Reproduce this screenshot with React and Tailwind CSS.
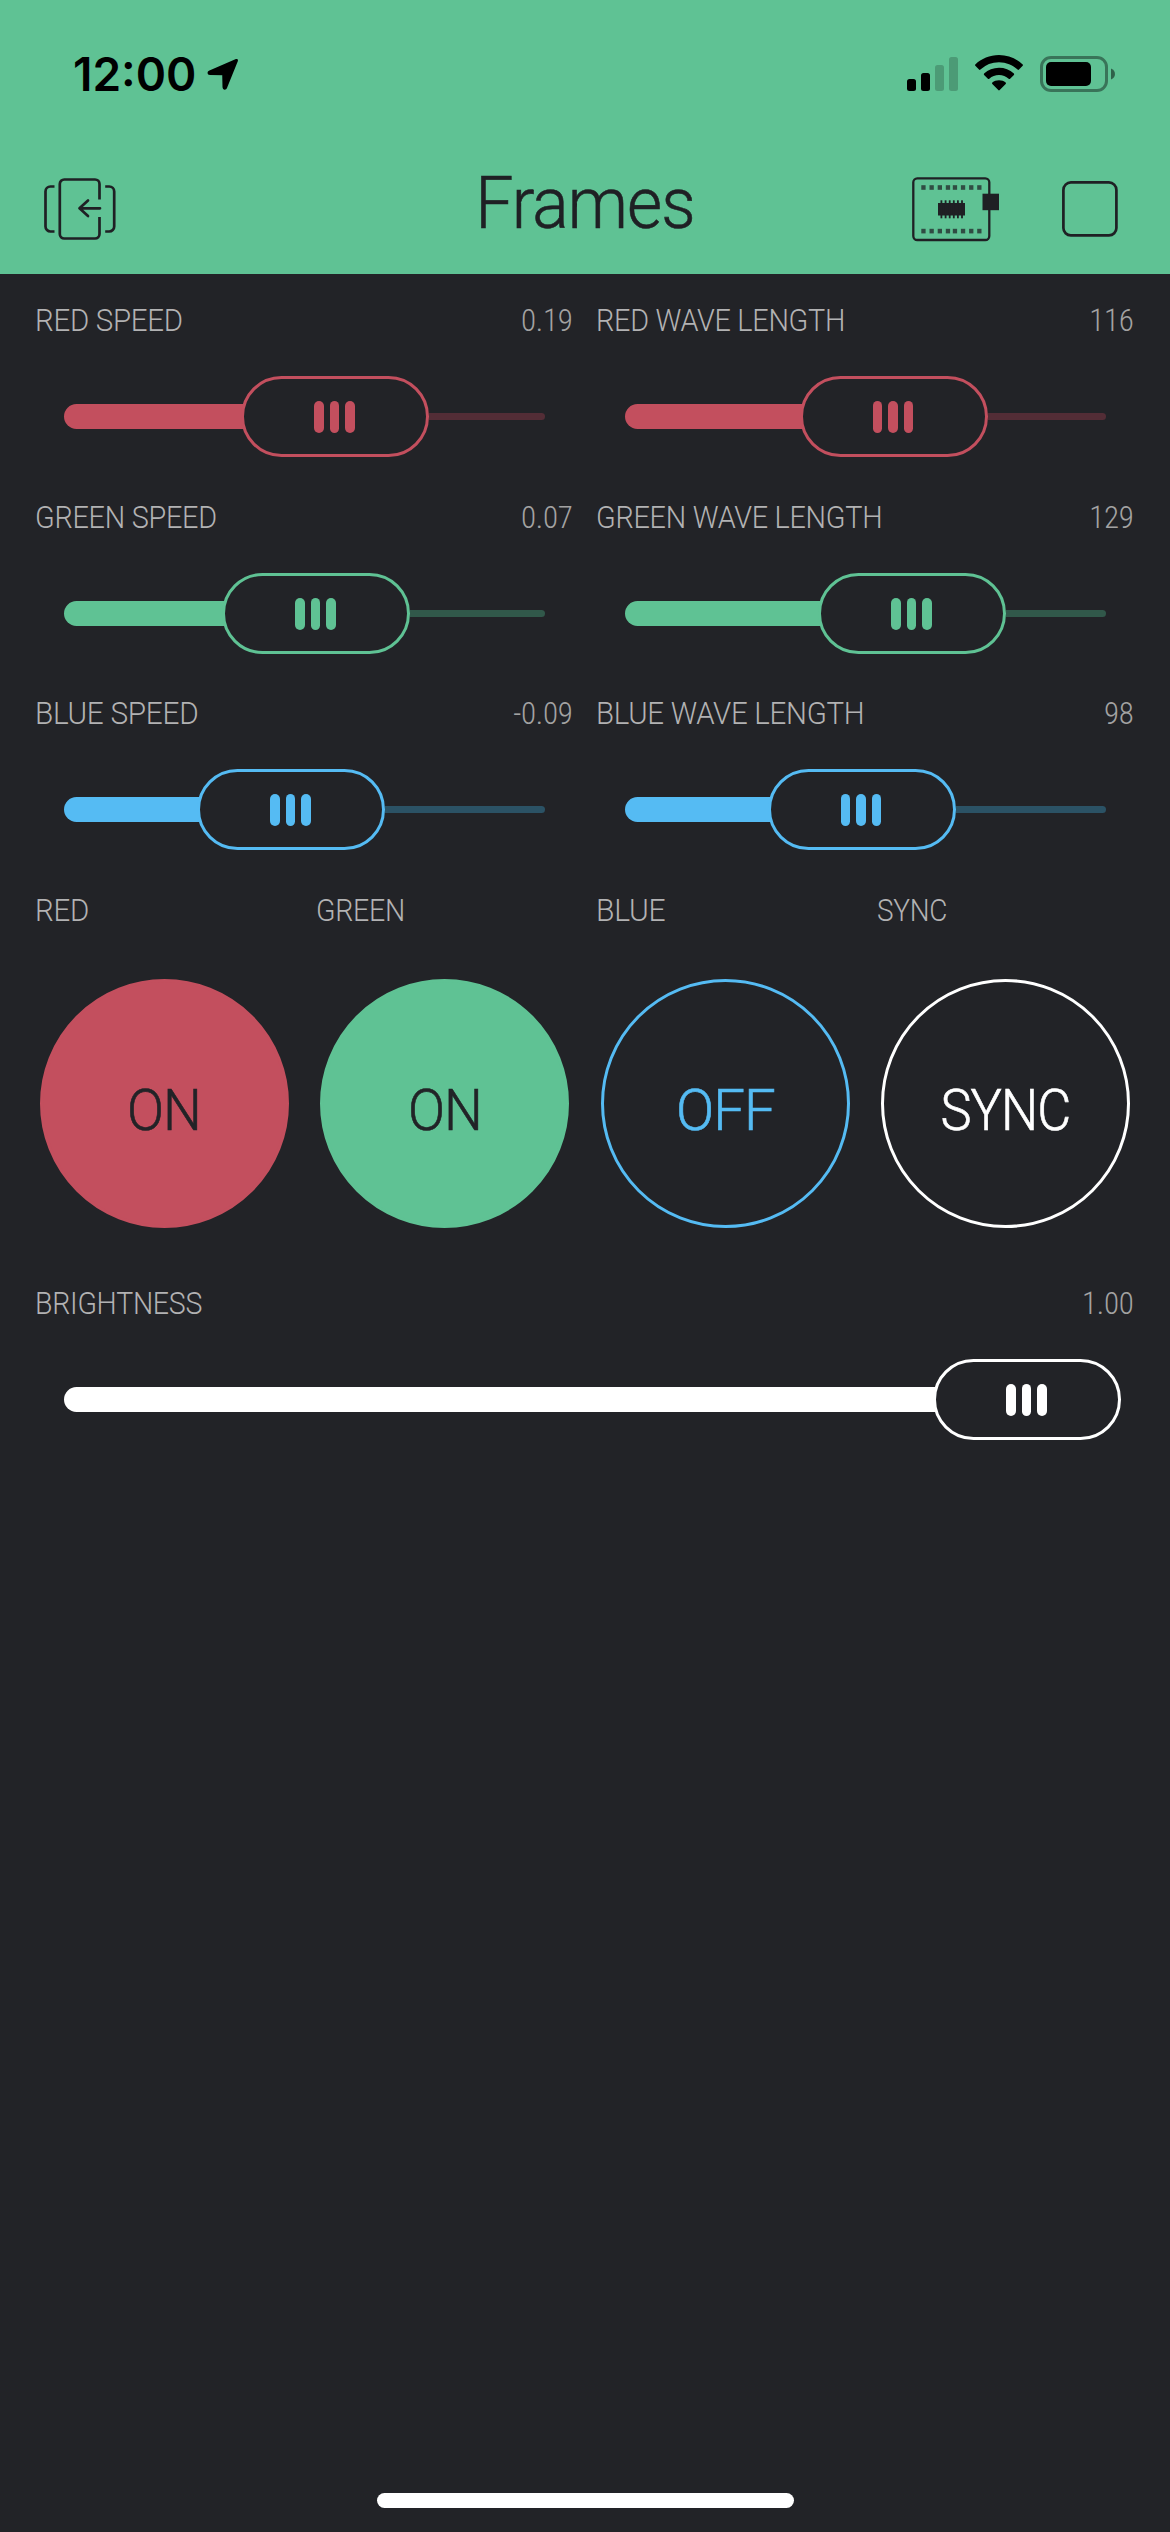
import React from "react";

const TONES = {
  red: {
    fill: "bg-[#c34f5e]",
    border: "border-[#c34f5e]",
    rail: "bg-[#532d36]",
    text: "text-[#c34f5e]",
  },
  green: {
    fill: "bg-[#5fc294]",
    border: "border-[#5fc294]",
    rail: "bg-[#31584a]",
    text: "text-[#5fc294]",
  },
  blue: {
    fill: "bg-[#55bbf3]",
    border: "border-[#55bbf3]",
    rail: "bg-[#2b5265]",
    text: "text-[#55bbf3]",
  },
  white: {
    fill: "bg-white",
    border: "border-white",
    rail: "bg-transparent",
    text: "text-white",
  },
};

const SLIDERS = [
  { label: "RED SPEED", value: "0.19", tone: "red", fill: "w-[181px]", fit: "scale-x-95" },
  { label: "RED WAVE LENGTH", value: "116", tone: "red", fill: "w-[178.5px]", fit: "scale-x-93" },
  { label: "GREEN SPEED", value: "0.07", tone: "green", fill: "w-[162px]", fit: "scale-x-93" },
  { label: "GREEN WAVE LENGTH", value: "129", tone: "green", fill: "w-[197px]", fit: "scale-x-93" },
  { label: "BLUE SPEED", value: "-0.09", tone: "blue", fill: "w-[137px]", fit: "scale-x-96" },
  { label: "BLUE WAVE LENGTH", value: "98", tone: "blue", fill: "w-[146.5px]", fit: "scale-x-95" },
];

const BUTTONS = [
  { label: "RED", text: "ON", tone: "red", on: true, fit: "scale-x-95", textFit: "scale-x-95" },
  { label: "GREEN", text: "ON", tone: "green", on: true, fit: "scale-x-92", textFit: "scale-x-95" },
  { label: "BLUE", text: "OFF", tone: "blue", on: false, fit: "scale-x-97", textFit: "scale-x-98" },
  { label: "SYNC", text: "SYNC", tone: "white", on: false, fit: "scale-x-90", textFit: "scale-x-91" },
];

function Caption({ label, value, fit }) {
  return (
    <div className="flex h-[44px] items-center justify-between pl-[7px] pr-[8.5px] text-[31px] leading-none tracking-[-0.3px] text-[#b2b2b3]">
      <span className={`origin-left whitespace-nowrap ${fit}`}>{label}</span>
      {value && <span className="text-[#a2a2a2] [font-stretch:75%]">{value}</span>}
    </div>
  );
}

function Slider({ label, value, tone, fill, fit, className = "" }) {
  const t = TONES[tone];
  return (
    <section className={className}>
      <Caption label={label} value={value} fit={fit} />
      <div className="mx-[36px] mt-[34px] flex h-[81px] items-center">
        <div className={`h-[25px] shrink-0 rounded-l-full ${t.fill} ${fill}`} />
        <div
          className={`-ml-1 flex h-full w-[188px] shrink-0 items-center justify-center gap-[6px] rounded-full border-3 bg-[#222327] pr-px ${t.border}`}
        >
          <i className={`h-8 w-[9.6px] rounded-full ${t.fill}`} />
          <i className={`h-8 w-[9.6px] rounded-full ${t.fill}`} />
          <i className={`h-8 w-[9.6px] rounded-full ${t.fill}`} />
        </div>
        <div className={`h-[7px] flex-1 rounded-r-full ${t.rail}`} />
      </div>
    </section>
  );
}

function RoundButton({ label, text, tone, on, fit, textFit }) {
  const t = TONES[tone];
  return (
    <section>
      <Caption label={label} fit={fit} />
      <div
        className={`mx-auto mt-[47px] flex size-[249px] items-center justify-center rounded-full border-3 pt-[14px] text-[57.5px] leading-none tracking-[-1px] [-webkit-text-stroke:0.6px] ${t.border} ${on ? t.fill : ""} ${on ? "text-[#222327]" : t.text}`}
      >
        <span className={textFit}>{text}</span>
      </div>
    </section>
  );
}

function LocationIcon() {
  return (
    <svg width="33" height="33" viewBox="0 0 33 33">
      <path
        d="M29.5 2.5 3 13.8c-1.4.7-1.3 1.6 0 1.7l13.7.3.3 13.3c.1 1.4 1.1 1.5 1.700.2Z"
        stroke="#000"
        strokeWidth="3"
        strokeLinejoin="round"
      />
    </svg>
  );
}

function SignalIcon() {
  return (
    <svg width="52" height="36" viewBox="0 0 52 36">
      <rect x="0" y="23" width="9" height="12" rx="2.5" />
      <rect x="14" y="17" width="9" height="18" rx="2.5" />
      <rect x="28" y="9" width="9" height="26" rx="2.5" opacity=".2" />
      <rect x="42" y="1" width="9" height="34" rx="2.5" opacity=".2" />
    </svg>
  );
}

function WifiIcon() {
  return (
    <svg width="48" height="36" viewBox="0 0 48 36">
      <path d="M24 0C14.8 0 6.4 3.6.3 9.4c-.4.4-.4 1 0 1.4l3.7 3.8c.4.4 1 .4 1.4 0A27 27 0 0 1 24 7.2c7.200 0 13.700 2.800 18.600 7.400.4.4 1 .4 1.400 0l3.700-3.800c.4-.4.4-1 0-1.400C41.600 3.600 33.200 0 24 0Z" />
      <path d="M24 12.800c-5.700 0-10.900 2.100-14.900 5.700-.4.4-.4 1 0 1.400l3.800 3.800c.4.4 1 .4 1.400 0A14.500 14.500 0 0 1 24 20c3.700 0 7.100 1.400 9.700 3.700.4.4 1 .4 1.400 0l3.800-3.800c.4-.4.4-1 0-1.400A22.200 22.200 0 0 0 24 12.800Z" />
      <path d="M24 25.200c-2.600 0-4.900.9-6.700 2.300-.4.4-.4 1 0 1.400l6 6.200c.4.4 1 .4 1.400 0l6-6.200c.4-.4.4-1 0-1.400-1.800-1.400-4.100-2.300-6.700-2.300Z" />
    </svg>
  );
}

function BatteryIcon() {
  return (
    <svg width="76" height="36" viewBox="0 0 76 36">
      <rect x="1.5" y="1.5" width="65" height="33" rx="9.5" fill="none" stroke="#000" strokeWidth="3" opacity=".4" />
      <rect x="6" y="6" width="45" height="24" rx="5" />
      <path d="M71 12.5c5.300 2 5.300 9 0 11Z" opacity=".5" />
    </svg>
  );
}

function ExitIcon() {
  return (
    <svg width="76" height="64" viewBox="0 0 76 64" fill="none" stroke="#1f2024" strokeWidth="2.7">
      <path d="M13.500 9.500H9.500a5 5 0 0 0-5 5v35a5 5 0 0 0 5 5h4" />
      <path d="M64.200 9.500h4a5 5 0 0 1 5 5v35a5 5 0 0 1-5 5h-4" />
      <path d="M58.500 22.500V7a4.500 4.500 0 0 0-4.500-4.500H23.300A4.500 4.500 0 0 0 18.800 7v50a4.500 4.500 0 0 0 4.500 4.500H54a4.500 4.500 0 0 0 4.500-4.500V40" />
      <path d="M59 31.300H38.500M47 23.500l-8.500 7.800 8.500 7.800" strokeLinecap="round" strokeLinejoin="round" />
    </svg>
  );
}

const PADS = [10.3, 18.5, 26.7, 34.8, 41.8, 49.9, 58.1, 66.2];
const PINS = [30, 34.2, 38.3, 42.4, 46.5, 50.6];

function BoardIcon() {
  return (
    <svg width="88" height="66" viewBox="0 0 88 66" fill="#1f2024">
      <rect x="2.3" y="2.3" width="76" height="61.7" rx="4" fill="none" stroke="#1f2024" strokeWidth="2.3" />
      {PADS.map((x) => (
        <g key={x} opacity=".72">
          <rect x={x} y="9.2" width="4.3" height="4.6" />
          <rect x={x} y="52.8" width="4.3" height="4.6" />
        </g>
      ))}
      <rect x="27" y="27" width="27" height="12.5" />
      {PINS.map((x) => (
        <rect key={x} x={x - 0.5} y="24.3" width="1.8" height="18" />
      ))}
      <rect x="71.5" y="17.7" width="16.5" height="16.5" />
    </svg>
  );
}

function StopIcon() {
  return (
    <svg width="56" height="56" viewBox="0 0 56 56">
      <rect x="1.4" y="1.4" width="53" height="53" rx="7.5" fill="none" stroke="#1f2024" strokeWidth="2.7" />
    </svg>
  );
}

export default function App() {
  return (
    <div className="flex h-[2532px] w-[1170px] flex-col overflow-hidden bg-[#222327] font-['Roboto',sans-serif] font-light">
      <header className="h-[274px] bg-[#5fc294]">
        <div className="flex h-[148px] items-center justify-between pl-[73px] pr-[54px]">
          <div className="flex items-center gap-[11px]">
            <span className="font-['Inter',sans-serif] text-[46px] font-semibold leading-none">12:00</span>
            <LocationIcon />
          </div>
          <div className="flex items-center">
            <SignalIcon />
            <div className="-mt-[2px] ml-[16px]">
              <WifiIcon />
            </div>
            <div className="ml-[17px]">
              <BatteryIcon />
            </div>
          </div>
        </div>
        <div className="grid h-[122px] grid-cols-[1fr_auto_1fr] items-center pl-[41px] pr-[52px]">
          <ExitIcon />
          <h1 className="-mr-[11px] scale-x-93 pb-3 text-[73px] leading-none tracking-[-1px] text-[#1f2024] [-webkit-text-stroke:0.6px]">
            Frames
          </h1>
          <div className="flex items-center justify-end gap-[63px]">
            <BoardIcon />
            <StopIcon />
          </div>
        </div>
      </header>

      <main className="mt-[24px] grid grid-cols-4 grid-rows-[197px_196px_197px_393px_197px] gap-x-2 px-7">
        {SLIDERS.map((s) => (
          <Slider key={s.label} {...s} className="col-span-2" />
        ))}
        {BUTTONS.map((b) => (
          <RoundButton key={b.label} {...b} />
        ))}
        <Slider
          label="BRIGHTNESS"
          value="1.00"
          tone="white"
          fill="w-[873px]"
          fit="scale-x-92"
          className="col-span-4"
        />
      </main>

      <div className="mx-auto mb-[24px] mt-auto h-[15px] w-[417px] rounded-full bg-white" />
    </div>
  );
}
